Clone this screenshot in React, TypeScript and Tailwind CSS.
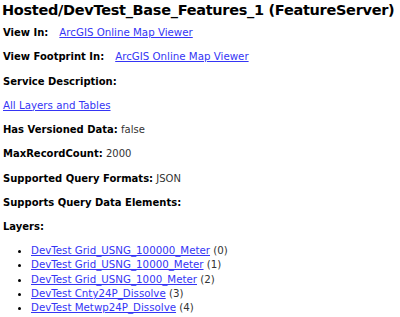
const layers = [
  "DevTest Grid_USNG_100000_Meter",
  "DevTest Grid_USNG_10000_Meter",
  "DevTest Grid_USNG_1000_Meter",
  "DevTest Cnty24P_Dissolve",
  "DevTest Metwp24P_Dissolve",
];

function Link({ children, className = "" }: { children: React.ReactNode; className?: string }) {
  return <a href="#" className={`text-[#3535f5] underline ${className}`}>{children}</a>;
}

export default function App() {
  return (
    <div className="bg-white text-black w-[400px] h-[317px] overflow-hidden px-[2px] font-['DejaVu_Sans',Verdana,sans-serif] text-[10px] leading-[13px]">
      <h2 className="font-bold text-[14.5px] tracking-[-0.3px] leading-[20px] whitespace-nowrap">Hosted/DevTest_Base_Features_1 (FeatureServer)</h2>
      <div className="mt-[6px] flex flex-col gap-[11.25px] pl-[1px]">
        <p><b>View In:</b><Link className="ml-[11px] text-[10.25px]">ArcGIS Online Map Viewer</Link></p>
        <p><b>View Footprint In:</b><Link className="ml-[11px] text-[10.25px]">ArcGIS Online Map Viewer</Link></p>
        <p><b>Service Description:</b></p>
        <p className="text-[10.25px]"><Link>All Layers and Tables</Link></p>
        <p><b>Has Versioned Data:</b> <span className="text-[#333]">false</span></p>
        <p><b>MaxRecordCount:</b> <span className="text-[#333]">2000</span></p>
        <p><b>Supported Query Formats:</b> <span className="text-[#333]">JSON</span></p>
        <p><b>Supports Query Data Elements:</b></p>
        <p><b>Layers:</b></p>
      </div>
      <ul className="mt-[10px] pl-[29px] list-disc">
        {layers.map((l, i) => (
          <li key={l} className="h-[14.25px] text-[10.25px] leading-[14.25px] text-[#333] marker:text-black">
            <Link>{l}</Link> ({i})
          </li>
        ))}
      </ul>
    </div>
  );
}
